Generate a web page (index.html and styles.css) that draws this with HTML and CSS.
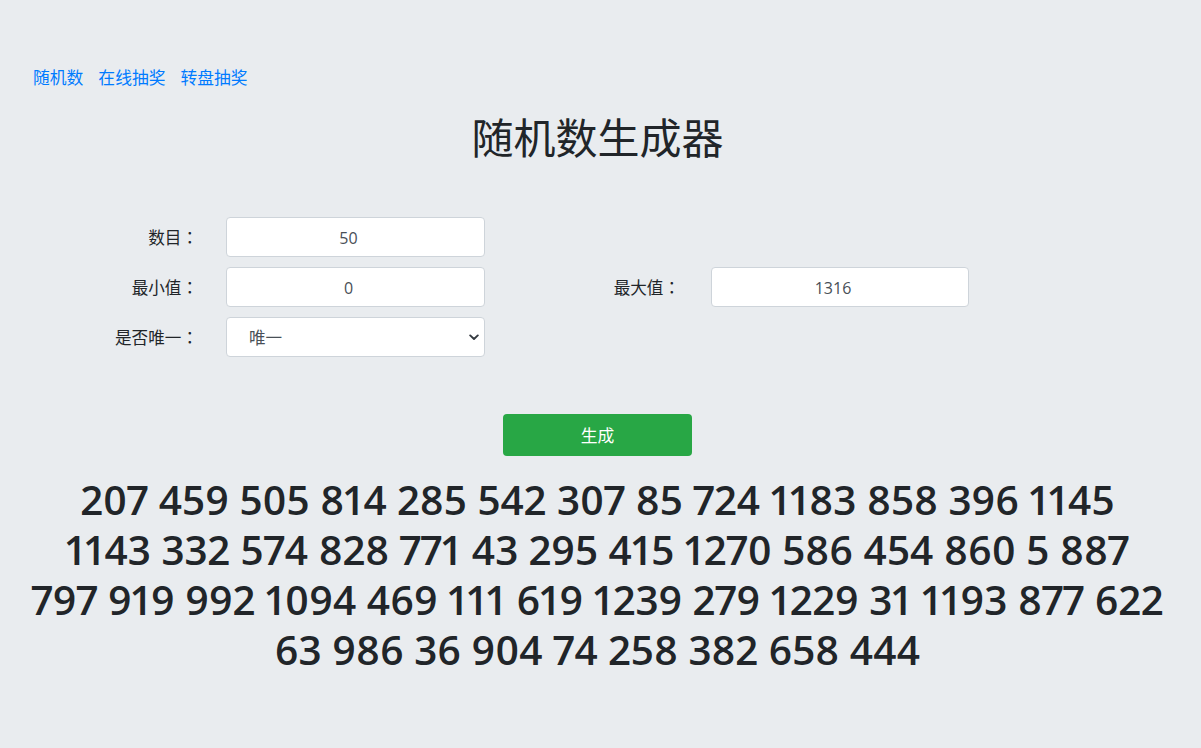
FILE: index.html
```html
<!DOCTYPE html>
<html lang="zh-CN">
<head>
<meta charset="utf-8">
<title>随机数生成器</title>
<link rel="stylesheet" href="styles.css">
</head>
<body>
<div class="page">
  <nav class="nav">
    <a href="#">随机数</a>
    <a href="#">在线抽奖</a>
    <a href="#">转盘抽奖</a>
  </nav>
  <h1 class="title">随机数生成器</h1>
  <form class="form">
    <label class="label">数目<span class="colon" lang="zh-TW">：</span></label>
    <input class="field" type="text" value="50">
    <span class="empty"></span>
    <span class="empty"></span>

    <label class="label">最小值<span class="colon" lang="zh-TW">：</span></label>
    <input class="field" type="text" value="0">
    <label class="label label-2">最大值<span class="colon" lang="zh-TW">：</span></label>
    <input class="field" type="text" value="1316">

    <label class="label">是否唯一<span class="colon" lang="zh-TW">：</span></label>
    <div class="select-wrap">
      <select class="field select">
        <option>唯一</option>
        <option>不唯一</option>
      </select>
      <svg class="chev" width="10" height="7" viewBox="0 0 10 7"><path d="M1.2 1.4 L5 5 L8.8 1.4" fill="none" stroke="#343a40" stroke-width="1.9" stroke-linecap="round" stroke-linejoin="round"/></svg>
    </div>
  </form>
  <div class="actions">
    <button class="btn" type="button">生成</button>
  </div>
  <div class="result">207 459 505 814 285 542 307 85 724 1183 858 396 1145<br>1143 332 574 828 771 43 295 415 1270 586 454 860 5 887<br>797 919 992 1094 469 111 619 1239 279 1229 31 1193 877 622<br>63 986 36 904 74 258 382 658 444</div>
</div>
</body>
</html>
```

FILE: styles.css
```css
* { box-sizing: border-box; }
html, body { margin: 0; padding: 0; }
body {
  background: #e9ecef;
  color: #212529;
  font-family: "Open Sans", "Noto Sans CJK SC", sans-serif;
  font-size: 16.8px;
  line-height: 25px;
  min-height: 748px;
}
.page {
  width: 1195px;
  padding-top: 65px;
}
.nav {
  display: flex;
  gap: 15px;
  padding-left: 33px;
  font-family: "Noto Sans CJK SC", sans-serif;
  font-size: 16.8px;
  line-height: 24px;
}
.nav a {
  color: #007bff;
  text-decoration: none;
}
.title {
  margin: 22px 0 0;
  text-align: center;
  font-family: "Noto Sans CJK SC", sans-serif;
  font-weight: 400;
  font-size: 42px;
  line-height: 50px;
  color: #212529;
}
.form {
  margin-top: 56px;
  display: grid;
  grid-template-columns: 226px 259px 226px 258px;
  grid-auto-rows: 40px;
  row-gap: 10px;
}
.label {
  font-family: "Noto Sans CJK SC", sans-serif;
  font-size: 16.6px;
  text-align: right;
  padding-right: 28px;
  line-height: 40px;
  color: #212529;
}
.colon {
  font-family: "Noto Sans CJK TC", sans-serif;
}
.label-2 { padding-right: 31px; }
.field {
  width: 100%;
  height: 40px;
  border: 1px solid #ced4da;
  border-radius: 4px;
  background: #fff;
  color: #495057;
  font-family: "Open Sans", "Noto Sans CJK SC", sans-serif;
  font-size: 16px;
  text-align: center;
  padding: 2px 26px 0 12px;
  outline: none;
}
.select-wrap { position: relative; }
.select {
  appearance: none;
  -webkit-appearance: none;
  text-align: left;
  padding: 0 12px 0 22px;
  font-family: "Noto Sans CJK SC", sans-serif;
  font-size: 16.6px;
}
.chev {
  position: absolute;
  right: 6px;
  top: 17px;
  pointer-events: none;
}
.actions {
  display: flex;
  justify-content: center;
  margin-top: 57px;
}
.btn {
  width: 189px;
  height: 42px;
  border: none;
  border-radius: 4px;
  background: #28a745;
  color: #fff;
  font-family: "Noto Sans CJK SC", sans-serif;
  font-size: 16.8px;
}
.result {
  margin-top: 19px;
  text-align: center;
  font-family: "Open Sans", sans-serif;
  font-weight: 600;
  font-size: 40.5px;
  line-height: 50px;
  font-variant-numeric: proportional-nums;
  color: #212529;
}
```
